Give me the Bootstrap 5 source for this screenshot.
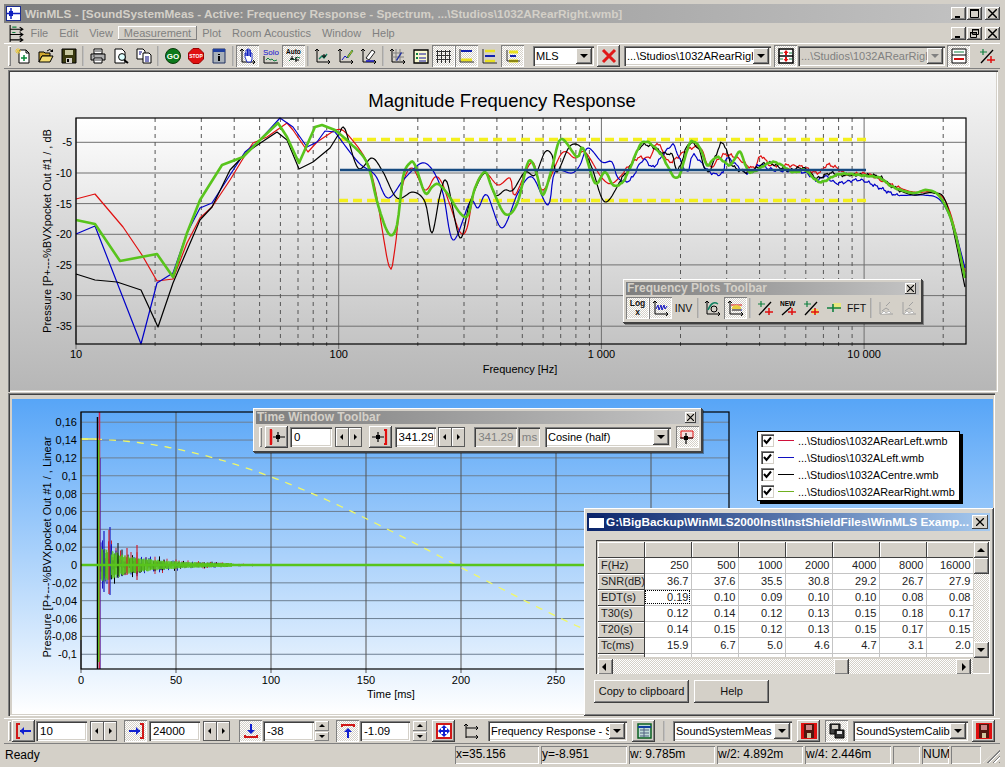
<!DOCTYPE html>
<html lang="en">
<head>
<meta charset="UTF-8" />
<title>WinMLS</title>
<link href="https://cdn.jsdelivr.net/npm/bootstrap@5.3.3/dist/css/bootstrap.min.css" rel="stylesheet" />
<style>
  html, body { margin: 0; height: 767px; overflow: hidden; background: #d4d0c8; }
  body { font: 11.5px "Liberation Sans", Arial, sans-serif; color: #000; }
  .app-frame { height: 767px; padding: 4px 5px 2px 4px; }
  .cap-bar { height: 19px; background: linear-gradient(90deg, #7e7e7e, #c4c4c4); color: #d4d0c8; font-weight: 700; font-size: 11.8px; padding-left: 2px; white-space: nowrap; }
  .app-ico { width: 15px; height: 15px; margin-right: 4px; }
  .win-key { width: 15px; height: 13px; padding: 0; border: 0; border-radius: 0; background: #d4d0c8; margin-left: 1px; box-shadow: inset -1px -1px #404040, inset 1px 1px #fff, inset -2px -2px #808080; display: inline-flex; align-items: center; justify-content: center; }
  .win-key svg { width: 9px; height: 9px; }
  .key-gap { margin-left: 3px; }
  .menu-row { height: 20px; color: #808080; font-size: 11px; padding-left: 4px; }
  .menu-ico { width: 17px; height: 17px; }
  .menu-item { padding: 1px 5.5px; }
  .menu-open { box-shadow: inset -1px -1px #808080, inset 1px 1px #fff; }
  .tool-row { height: 26px; padding-left: 4px; border-top: 1px solid #fff; border-bottom: 1px solid #808080; }
  .grip { width: 3px; height: 20px; background: #d4d0c8; box-shadow: inset 1px 1px #fff, inset -1px -1px #808080; flex: none; }
  .tb { width: 23px; height: 22px; padding: 0; border: 0; border-radius: 0; background: transparent; flex: none; display: inline-flex; align-items: center; justify-content: center; }
  .tb svg { width: 16px; height: 16px; overflow: visible; }
  .tb-up { box-shadow: inset -1px -1px #404040, inset 1px 1px #fff, inset -2px -2px #808080; background: #d4d0c8; }
  .tb-on { box-shadow: inset 1px 1px #808080, inset -1px -1px #fff; background: repeating-conic-gradient(#fff 0 25%, #d4d0c8 0 50%) 0 0 / 2px 2px; }
  .tb-sep { width: 6px; height: 20px; flex: none; position: relative; }
  .tb-sep::after { content: ""; position: absolute; left: 2px; top: 0; bottom: 0; width: 2px; background: #808080; box-shadow: 1px 0 #fff; transform: scaleX(.5); }
  .win-field { height: 20px; border-radius: 0; border: 0; padding: 1px 3px 1px 4px; font-size: 11.5px; line-height: 18px; background: #fff; color: #000; min-width: 0; box-shadow: inset 1px 1px #808080, inset 2px 2px #404040, inset -1px -1px #fff, inset -2px -2px #d4d0c8; white-space: nowrap; overflow: hidden; }
  .win-field:focus { box-shadow: inset 1px 1px #808080, inset 2px 2px #404040, inset -1px -1px #fff, inset -2px -2px #d4d0c8; background: #fff; }
  .field-off, .field-off:focus { background: #d4d0c8; color: #808080; }
  .win-combo { position: relative; flex: none; }
  .win-combo .win-field { width: 100%; padding: 1px 18px 1px 3px; font-size: 11px; }
  .combo-drop { position: absolute; right: 2px; top: 2px; width: 16px; height: 16px; background: #d4d0c8; box-shadow: inset -1px -1px #404040, inset 1px 1px #fff, inset -2px -2px #808080; }
  .combo-drop::after { content: ""; position: absolute; left: 4px; top: 6px; border: 4px solid transparent; border-top-color: #000; border-bottom: 0; }
  .combo-off .combo-drop::after { border-top-color: #808080; }
  .spin-h { width: 27px; height: 20px; flex: none; background: #5a5a5a; padding: 1px; gap: 1px; }
  .spin-h i { flex: 1; background: #d4d0c8; box-shadow: inset 1px 1px #fff; position: relative; }
  .spin-h i::after { content: ""; position: absolute; top: 6px; border: 3px solid transparent; }
  .spin-l::after { left: 4px; border-right: 3px solid #000 !important; border-left: 0 !important; }
  .spin-r::after { left: 5px; border-left: 3px solid #000 !important; border-right: 0 !important; }
  .spin-v { width: 14px; height: 20px; flex: none; gap: 1px; }
  .spin-v i { flex: 1; background: #d4d0c8; box-shadow: inset -1px -1px #808080, inset 1px 1px #fff; position: relative; }
  .spin-v i::after { content: ""; position: absolute; left: 4px; top: 3px; border: 3px solid transparent; }
  .spin-u::after { border-bottom: 3px solid #000 !important; border-top: 0 !important; }
  .spin-d::after { border-top: 3px solid #000 !important; border-bottom: 0 !important; }
  .gr1 { margin-right: 1px; } .gr2 { margin-right: 2px; } .gr3 { margin-right: 3px; } .gr4 { margin-right: 4px; }
  .gr5 { margin-right: 5px; } .gr6 { margin-right: 6px; } .gr7 { margin-right: 7px; } .gr9 { margin-right: 9px; }
  .gl3 { margin-left: 3px; }
  .w42 { width: 42px; } .w43 { width: 43px; } .w51 { width: 51px; } .w50 { width: 50px; } .w61 { width: 61px; }
  .w139 { width: 139px; } .w119 { width: 119px; } .w115 { width: 115px; } .w147 { width: 147px; } .w126 { width: 126px; }

  .work { height: 649px; }
  .chart-top { margin: 1px 0 0 4px; width: 990px; height: 322px; background: linear-gradient(#f6f6f6, #b6b6b6); box-shadow: inset 1px 1px #808080, inset 2px 2px #404040, inset -1px -1px #fff, inset -2px -2px #d4d0c8; }
  .chart-wrap { margin: 1px 0 0 4px; width: 987px; height: 323px; padding: 6px 3px 2px 4px; box-shadow: inset 1px 1px #808080, inset 2px 2px #404040, inset -1px -1px #fff; }
  .chart-low { width: 981px; height: 315px; background: linear-gradient(#57a5f7, #ffffff); }
  .chart-top svg, .chart-low svg { display: block; }
  .chart-svg text { font: 11px "Liberation Sans", Arial, sans-serif; fill: #000; }
  .chart-svg .plot-title { font-size: 18.5px; }

  .float-bar { position: absolute; background: #d4d0c8; box-shadow: inset -1px -1px #404040, inset 1px 1px #fff, 1px 1px #404040, 2px 2px rgba(0,0,0,.35); padding: 3px; }
  .float-freq { left: 619px; top: 210px; width: 299px; height: 44px; }
  .float-time { left: 249px; top: 339px; width: 449px; height: 44px; }
  .float-cap { height: 13px; background: linear-gradient(90deg, #7e7e7e, #c4c4c4); color: #d4d0c8; font-weight: 700; font-size: 12px; line-height: 13px; padding-left: 1px; margin-bottom: 2px; }
  .float-close { width: 11px; height: 11px; background: #d4d0c8; margin-right: 3px; box-shadow: inset -1px -1px #404040, inset 1px 1px #fff; }
  .float-close svg { display: block; width: 7px; height: 7px; margin: 2px; }
  .tb-txt { font-size: 10.5px; color: #111; line-height: 10px; }
  .tb-bold { font-weight: 700; font-size: 8.5px; line-height: 9px; }

  .graph-legend { position: absolute; left: 753px; top: 362px; width: 203px; height: 70px; background: #fff; border: 1px solid #000; box-shadow: 3px 3px #000; padding: 0 0 0 3px; font-size: 10.8px; }
  .legend-row { height: 17px; }
  .legend-box { width: 13px; height: 13px; flex: none; background: #fff; margin-right: 4px; box-shadow: inset 1px 1px #808080, inset 2px 2px #404040, inset -1px -1px #d4d0c8; }
  .legend-box svg { display: block; width: 13px; height: 13px; }
  .legend-line { width: 16px; height: 1px; flex: none; margin-right: 4px; }
  .lc-red { background: #d0103a; } .lc-blue { background: #1010c0; } .lc-black { background: #000; } .lc-green { background: #70b020; }

  .result-dlg { position: absolute; left: 580px; top: 439px; width: 410px; height: 208px; background: #d8d5ce; box-shadow: inset -1px -1px #404040, inset 1px 1px #fff, inset -2px -2px #808080; padding: 5px 4px 0 3px; }
  .dlg-cap { height: 18px; background: linear-gradient(90deg, #0a246a, #a6caf0); color: #fff; font-weight: 700; font-size: 11.8px; white-space: nowrap; padding-left: 2px; }
  .dlg-ico { width: 15px; height: 12px; background: #fff; border-top: 2px solid #0a246a; margin-right: 2px; flex: none; }
  .dlg-x { width: 16px; height: 14px; margin: 0 2px 0 auto; background: #d4d0c8; flex: none; box-shadow: inset -1px -1px #404040, inset 1px 1px #fff; }
  .dlg-x svg { display: block; width: 8px; height: 8px; margin: 3px 4px; }
  .grid-shell { margin: 9px 0 0 9px; width: 394px; height: 134px; padding: 2px 1px 1px 2px; background: #d4d0c8; box-shadow: inset 1px 1px #404040, inset -1px -1px #fff; overflow: hidden; }
  .grid-view { width: 375px; height: 115px; overflow: hidden; background: #fff; }
  .result-table { table-layout: fixed; border-collapse: collapse; width: 375px; font-size: 11px; }
  .result-table td { height: 16px; padding: 0 2px 0 0; text-align: right; line-height: 15px; border: 1px solid #c4c4c4; overflow: hidden; white-space: nowrap; color: #222; }
  .result-table tr:first-child td { height: 15px; }
  .result-table tr > td:first-child, .result-table tr:first-child td { background: #d4d0c8; text-align: left; padding-left: 3px; border: 0; border-right: 1px solid #404040; border-bottom: 1px solid #404040; box-shadow: inset 1px 1px #fff; }
  .cell-sel { outline: 1px dotted #000; outline-offset: -2px; }
  .v-scroll { width: 15px; height: 116px; margin-left: 1px; background: repeating-conic-gradient(#fff 0 25%, #d4d0c8 0 50%) 0 0 / 2px 2px; position: relative; }
  .h-scroll { height: 16px; width: 375px; background: repeating-conic-gradient(#fff 0 25%, #d4d0c8 0 50%) 0 0 / 2px 2px; position: relative; margin-top: 1px; }
  .sc-btn { position: absolute; background: #d4d0c8; box-shadow: inset -1px -1px #404040, inset 1px 1px #fff, inset -2px -2px #808080; width: 15px; height: 16px; }
  .sc-btn::after { content: ""; position: absolute; border: 4px solid transparent; }
  .sc-top { top: 0; left: 0; } .sc-top::after { left: 3px; top: 2px; border-bottom-color: #000; }
  .sc-thumb-v { top: 16px; left: 0; }
  .sc-bot { bottom: 0; left: 0; } .sc-bot::after { left: 3px; top: 6px; border-top-color: #000; }
  .sc-left { left: 0; top: 0; } .sc-left::after { left: 0; top: 4px; border-right-color: #000; }
  .sc-thumb-h { left: 236px; top: 0; }
  .sc-right { right: 2px; top: 0; } .sc-right::after { left: 6px; top: 4px; border-left-color: #000; }
  .dlg-btn { height: 23px; padding: 0; border: 0; border-radius: 0; background: #d4d0c8; font-size: 11px; color: #111; box-shadow: inset -1px -1px #404040, inset 1px 1px #fff, inset -2px -2px #808080; }
  .dlg-btn-copy { width: 95px; margin: 6px 5px 0 7px; }
  .dlg-btn-help { width: 75px; margin-top: 6px; }

  .low-row { height: 26px; padding-left: 4px; border-top: 1px solid #fff; border-bottom: 1px solid #808080; }
  .status-row { height: 20px; font-size: 12px; padding: 2px 0 0 1px; }
  .status-ready { flex: 1; }
  .status-cell { height: 18px; margin-right: 2px; padding-left: 1px; line-height: 17px; box-shadow: inset 1px 1px #808080, inset -1px -1px #fff; flex: none; overflow: hidden; white-space: nowrap; }
  .sw84 { width: 84px; } .sw86 { width: 86px; } .sw27 { width: 27px; } .sw30 { width: 30px; }
  .size-grip { width: 17px; height: 16px; flex: none; background: repeating-linear-gradient(135deg, #d4d0c8 0 2px, #808080 2px 3px, #fff 3px 4px); clip-path: polygon(100% 0, 100% 100%, 0 100%); }
</style>
</head>
<body>
<svg class="d-none" xmlns="http://www.w3.org/2000/svg">
  <symbol id="i-axes" viewBox="0 0 16 16"><path d="M2 1v13h13M0 3l2-2 2 2M13 12l2 2-2 2" fill="none" stroke="#000"/></symbol>
  <symbol id="i-new" viewBox="0 0 16 16"><path d="M4 2h7l3 3v10H4z" fill="#fff" stroke="#000"/><path d="M11 2v3h3" fill="none" stroke="#000"/><path d="M6 10h6M9 7v6" stroke="#0a8a3a" stroke-width="1.5"/><path d="M3 0v6M0 3h6M1 1l4 4M5 1l-4 4" stroke="#e8c840"/></symbol>
  <symbol id="i-open" viewBox="0 0 16 16"><path d="M1 4h5l1 1h5v3H4l-3 6z" fill="#d0a830" stroke="#000"/><path d="M4 8h11l-3 6H1z" fill="#f4dc70" stroke="#000"/><path d="M9 3q3-3 5 0" fill="none" stroke="#000"/><path d="M15 1v3h-3z"/></symbol>
  <symbol id="i-save" viewBox="0 0 16 16"><path d="M1 1h14v14H1z" fill="#3a3a10" stroke="#000"/><path d="M4 2h8v5H4z" fill="#c8c8a0"/><path d="M5 10h6v5H5z" fill="#d4d0c8"/><path d="M6 11h2v3H6z"/></symbol>
  <symbol id="i-print" viewBox="0 0 16 16"><path d="M4 1h8v5H4z" fill="#fff" stroke="#000"/><path d="M1 6h14v6H1z" fill="#b0b0b0" stroke="#000"/><path d="M4 10h8v5H4z" fill="#fff" stroke="#000"/><path d="M5 12h6M5 3h6M3 8h2" stroke="#404040"/></symbol>
  <symbol id="i-prev" viewBox="0 0 16 16"><path d="M2 1h7l3 3v11H2z" fill="#fff" stroke="#000"/><circle cx="9" cy="9" r="3.4" fill="#dff" stroke="#000"/><path d="M11 12l4 3" stroke="#000" stroke-width="2"/></symbol>
  <symbol id="i-copy" viewBox="0 0 16 16"><path d="M1 1h6l2 2v8H1z" fill="#fff" stroke="#000"/><path d="M7 5h6l2 2v8H7z" fill="#fff" stroke="#000"/><path d="M3 4h3M3 6h2M9 9h4M9 11h4M9 13h4" stroke="#000080"/></symbol>
  <symbol id="i-go" viewBox="0 0 16 16"><circle cx="8" cy="8" r="7.5" fill="#0c7a1c" stroke="#0a3a0a"/><text x="8" y="11" text-anchor="middle" font-family="Liberation Sans" font-weight="700" font-size="8" fill="#fff">GO</text></symbol>
  <symbol id="i-stop" viewBox="0 0 16 16"><path d="M5 .5h6L15.500 5v6L11 15.500H5L.5 11V5z" fill="#e01010" stroke="#900"/><text x="8" y="10" text-anchor="middle" font-family="Liberation Sans" font-weight="700" font-size="5" fill="#fff">STOP</text></symbol>
  <symbol id="i-info" viewBox="0 0 16 16"><path d="M2 1h12v14H2z" fill="#a8b0b8" stroke="#203060"/><path d="M2 1h12v3H2z" fill="#2040a0"/><path d="M7 6h2v1H7zM7 8h2v5H7z" fill="#000"/></symbol>
  <symbol id="i-hand" viewBox="0 0 16 16"><use href="#i-axes"/><path d="M5 9V5h1v3-6h1.500v6V1H9v7-6h1.500v7-4H12v6l-1 3H7z" fill="#fff" stroke="#1020c0" stroke-width=".9"/></symbol>
  <symbol id="i-solo" viewBox="0 0 16 16"><text x="0" y="7" font-family="Liberation Sans" font-size="8" fill="#1010d0">Solo</text><path d="M1 8v7h14" fill="none" stroke="#000"/><path d="M3 12l2-2 2 2 2-1 2 2 3-1" fill="none" stroke="#108040"/></symbol>
  <symbol id="i-auto" viewBox="0 0 16 16"><text x="0" y="6" font-family="Liberation Sans" font-weight="700" font-size="6.500" fill="#000">Auto</text><path d="M3 13l3-3 2 2 3-3 3 1" fill="none" stroke="#108040"/><path d="M6 8v4M10 9v5M4 11h4M9 12h4" stroke="#000"/></symbol>
  <symbol id="i-g1" viewBox="0 0 16 16"><use href="#i-axes"/><path d="M4 11l3-3 2 2 3-4" fill="none" stroke="#108060" stroke-width="1.400"/><path d="M9 6v4M7 8h4" stroke="#000"/></symbol>
  <symbol id="i-g2" viewBox="0 0 16 16"><use href="#i-axes"/><path d="M4 12l3-4 2 2 3-5" fill="none" stroke="#1010c0"/><path d="M9 9l5-7 1 1-5 7z" fill="#e0c020" stroke="#108030" stroke-width=".7"/></symbol>
  <symbol id="i-g3" viewBox="0 0 16 16"><use href="#i-axes"/><path d="M5 10l6-8 3 2-6 8z" fill="#fff" stroke="#202020"/><path d="M5 13h8" stroke="#1010c0" stroke-width="1.500"/></symbol>
  <symbol id="i-g4" viewBox="0 0 16 16"><use href="#i-axes"/><path d="M2 5h12M2 9h12M6 1v13M10 1v13" stroke="#808080"/><path d="M6 12l5-8 1 1-5 8z" fill="#2030a0"/></symbol>
  <symbol id="i-list" viewBox="0 0 16 16"><path d="M1 2h14v13H1z" fill="#f8f8d0" stroke="#000" stroke-width="1.300"/><path d="M3 5h2v2H3zM3 9h2v2H3z" fill="#108040"/><path d="M6 6h7M6 10h7M6 13h7" stroke="#1010a0"/></symbol>
  <symbol id="i-grid" viewBox="0 0 16 16"><path d="M1.500 2v13M5.500 2v13M9.500 2v13M13.500 2v13M0 3.500h15M0 7.500h15M0 11.500h15" stroke="#303030"/></symbol>
  <symbol id="i-yb" viewBox="0 0 16 16"><path d="M2 3h11" stroke="#1020b0" stroke-width="2"/><path d="M2 12h11" stroke="#e8e020" stroke-width="3"/><path d="M1 1v13h14" fill="none" stroke="#000" stroke-width=".8"/></symbol>
  <symbol id="i-yc" viewBox="0 0 16 16"><path d="M3 3h10M3 13h10" stroke="#e8e020" stroke-width="2.500"/><path d="M3 8h10" stroke="#1020b0" stroke-width="2"/><path d="M1 1v14h14" fill="none" stroke="#000" stroke-width=".8"/></symbol>
  <symbol id="i-yd" viewBox="0 0 16 16"><path d="M4 4h9M4 13h9" stroke="#e8e020" stroke-width="3"/><path d="M5 8h6" stroke="#1020b0" stroke-width="2"/><path d="M2 2v11h13" fill="none" stroke="#000" stroke-width=".8"/></symbol>
  <symbol id="i-x" viewBox="0 0 16 16"><path d="M2 2l12 12M14 2L2 14" stroke="#e01818" stroke-width="3"/></symbol>
  <symbol id="i-match" viewBox="0 0 16 16"><path d="M1 1h14v14H1z" fill="#fff" stroke="#000" stroke-width="1.500"/><path d="M1 8h14" stroke="#000" stroke-width="1.500"/><path d="M8 3v4M8 9v4" stroke="#e01010" stroke-width="2"/><path d="M5.500 5L8 2l2.500 3zM5.500 11L8 14l2.500-3z" fill="#e01010"/><path d="M2 5h3M11 5h3M2 11h3M11 11h3" stroke="#108040"/></symbol>
  <symbol id="i-stack" viewBox="0 0 16 16"><path d="M1 1h14v14H1z" fill="#fff" stroke="#000"/><path d="M1 7h14" stroke="#000"/><path d="M3 4h10" stroke="#108040"/><path d="M3 11h10" stroke="#d01010" stroke-width="2"/></symbol>
  <symbol id="i-merge" viewBox="0 0 16 16"><path d="M2 15L14 2" stroke="#000" stroke-width="1.300"/><path d="M1 4h7M4 1v6" stroke="#108040" stroke-width="1.200"/><path d="M8 12h8M12 8v7" stroke="#e01010" stroke-width="1.500"/></symbol>
  <symbol id="i-merge2" viewBox="0 0 16 16"><text x="0" y="6" font-family="Liberation Sans" font-weight="700" font-size="6.500">NEW</text><path d="M2 15l9-8" stroke="#000" stroke-width="1.300"/><path d="M8 12h8M12 8v7" stroke="#e01010" stroke-width="1.500"/></symbol>
  <symbol id="i-merge3" viewBox="0 0 16 16"><path d="M2 15L14 2" stroke="#000" stroke-width="1.300"/><path d="M1 4h7M4 1v6" stroke="#108040" stroke-width="1.200"/><path d="M9 9h6v5H9z" fill="#f0e060"/><path d="M8 12h8M12 8v7" stroke="#e01010" stroke-width="1.500"/></symbol>
  <symbol id="i-cross" viewBox="0 0 16 16"><path d="M7 3h8v6H7z" fill="#e8e880"/><path d="M1 8h14M7 4v8" stroke="#108040" stroke-width="1.600"/></symbol>
  <symbol id="i-wave" viewBox="0 0 16 16"><use href="#i-axes"/><path d="M3 9l2-4 1 5 2-5 1 5 2-5 1 4 2-3" fill="none" stroke="#1010c0"/></symbol>
  <symbol id="i-phase" viewBox="0 0 16 16"><use href="#i-axes"/><path d="M3 10Q7 0 13 4" fill="none" stroke="#108060" stroke-width="1.500"/><circle cx="9" cy="9" r="3" fill="none" stroke="#000"/></symbol>
  <symbol id="i-stepb" viewBox="0 0 16 16"><use href="#i-axes"/><path d="M3 5h11" stroke="#e01010"/><path d="M4 7q4-4 9 0v4H4z" fill="#e8d040"/><path d="M4 10h10" stroke="#1020b0"/></symbol>
  <symbol id="i-gray1" viewBox="0 0 16 16"><path d="M2 2v12h13" fill="none" stroke="#a0a0a0"/><path d="M4 11l4-3 3 2M8 6l4-4" fill="none" stroke="#a0a0a0"/><path d="M3 14l3-3 2 2 3-2 2 2" fill="#fff" stroke="#b8b8b8"/></symbol>
  <symbol id="i-lspk" viewBox="0 0 16 16"><path d="M1 1H0v14h1" transform="translate(2)" fill="none" stroke="#e01010" stroke-width="2.500"/><path d="M4 8h12M9 3v10" stroke="#000" stroke-width="1.200"/><path d="M7 6h4v4H7z"/></symbol>
  <symbol id="i-rspk" viewBox="0 0 16 16"><path d="M12 1h2v14h-2" fill="none" stroke="#e01010" stroke-width="2.200"/><path d="M0 8h12M6 3v10" stroke="#000" stroke-width="1.200"/><path d="M4 6h4v4H4z"/></symbol>
  <symbol id="i-box-spk" viewBox="0 0 16 16"><path d="M2 2h12v7H2z" fill="#f4e0e0" stroke="#e01010"/><path d="M1 9h13M7 4v11" stroke="#000" stroke-width="1.200"/><path d="M5 7h4v4H5z"/></symbol>
  <symbol id="i-xl" viewBox="0 0 16 16"><path d="M4 1H1v14h3" fill="none" stroke="#d01818" stroke-width="2"/><path d="M4 8h11" stroke="#1020d0" stroke-width="2"/><path d="M8 4l-4 4 4 4z" fill="#1020d0"/></symbol>
  <symbol id="i-xr" viewBox="0 0 16 16"><path d="M12 1h3v14h-3" fill="none" stroke="#d01818" stroke-width="2"/><path d="M1 8h11" stroke="#1020d0" stroke-width="2"/><path d="M8 4l4 4-4 4z" fill="#1020d0"/></symbol>
  <symbol id="i-yl" viewBox="0 0 16 16"><path d="M2 12v2h12v-2" fill="none" stroke="#d01818" stroke-width="2"/><path d="M8 1v9" stroke="#1020d0" stroke-width="2"/><path d="M4 7l4 4 4-4z" fill="#1020d0"/></symbol>
  <symbol id="i-yh" viewBox="0 0 16 16"><path d="M2 4V2h12v2" fill="none" stroke="#d01818" stroke-width="2"/><path d="M8 6v9" stroke="#1020d0" stroke-width="2"/><path d="M4 9l4-4 4 4z" fill="#1020d0"/></symbol>
  <symbol id="i-fit" viewBox="0 0 16 16"><path d="M1 1h14v14H1z" fill="#fff" stroke="#d01818" stroke-width="2"/><path d="M3 8h10M8 3v10" stroke="#1020d0" stroke-width="2"/><path d="M5 5L2 8l3 3zM11 5l3 3-3 3zM5 5l3-3 3 3zM5 11l3 3 3-3z" fill="#1020d0"/></symbol>
  <symbol id="i-axes2" viewBox="0 0 16 16"><path d="M2 1v14M2 5h12M2 14h12M0 3l2-2 2 2M12 3l2 2-2 2M12 12l2 2-2 2" fill="none" stroke="#000"/></symbol>
  <symbol id="i-tbl" viewBox="0 0 16 16"><path d="M2 1h13v14H2z" fill="#c0dcd8" stroke="#0a6020" stroke-width="1.500"/><path d="M2 4h13" stroke="#1040a0" stroke-width="2"/><path d="M4 7h9M4 10h9M4 13h9M8 5v9" stroke="#506080"/></symbol>
  <symbol id="i-disk" viewBox="0 0 16 16"><path d="M0 0h16v16H0z" fill="#e01010"/><path d="M3 1h10v14H3z" fill="#501810"/><path d="M5 2h6v5H5z" fill="#c88"/><path d="M6 10h4v5H6z" fill="#d0c8a0"/></symbol>
  <symbol id="i-disk2" viewBox="0 0 16 16"><path d="M1 1h10v10H1z" fill="#404040" stroke="#000"/><path d="M3 2h6v4H3z" fill="#d4d0c8"/><path d="M6 7h9v8H6z" fill="#303030" stroke="#000"/><path d="M8 8h5v3H8z" fill="#e0e0e0"/></symbol>
  <symbol id="i-close" viewBox="0 0 8 8"><path d="M0 0l8 8M8 0L0 8" stroke="#000" stroke-width="1.300"/></symbol>
  <symbol id="i-min" viewBox="0 0 9 9"><path d="M1 7h5v2H1z"/></symbol>
  <symbol id="i-max" viewBox="0 0 9 9"><path d="M.5 1.500h8v7h-8z" fill="none" stroke="#000"/><path d="M0 0h9v2H0z"/></symbol>
  <symbol id="i-res" viewBox="0 0 9 9"><path d="M2.500 .5h6v5h-6zM.5 3.500h6v5h-6z" fill="#d4d0c8" stroke="#000"/><path d="M2 0h7v1.500H2zM0 3h7v1.500H0z"/></symbol>
  <symbol id="i-check" viewBox="0 0 13 13"><path d="M3 6l2.500 3L10 3.500" fill="none" stroke="#000" stroke-width="2"/></symbol>
</svg>

<div class="app-frame d-flex flex-column">
  <div class="cap-bar d-flex align-items-center">
    <svg class="app-ico" viewBox="0 0 15 15"><path d="M0 0h15v15H0z" fill="#1c2c90"/><path d="M1 1h13v13H1z" fill="#fff"/><path d="M1 7.500h13M5 2v11" stroke="#1020c0" stroke-width="1.500"/><path d="M3 5h4v5H3z" fill="#1020c0"/></svg>
    <span>WinMLS - [SoundSystemMeas - Active: Frequency Response - Spectrum, ...\Studios\1032ARearRight.wmb]</span>
    <div class="ms-auto d-flex align-items-center">
      <span class="win-key"><svg><use href="#i-min"/></svg></span>
      <span class="win-key"><svg><use href="#i-max"/></svg></span>
      <span class="win-key key-gap"><svg><use href="#i-close"/></svg></span>
    </div>
  </div>

  <div class="menu-row d-flex align-items-center">
    <svg class="menu-ico" viewBox="0 0 16 16"><path d="M2 0v16M2 4h12M2 9h12M2 14h12M11 2l3 2-3 2M11 7l3 2-3 2M11 12l3 2-3 2" fill="none" stroke="#000"/><path d="M4 2h4M4 7h3" stroke="#108040"/></svg>
    <span class="menu-item">File</span><span class="menu-item">Edit</span><span class="menu-item">View</span>
    <span class="menu-item menu-open">Measurement</span>
    <span class="menu-item">Plot</span><span class="menu-item">Room Acoustics</span><span class="menu-item">Window</span><span class="menu-item">Help</span>
    <div class="ms-auto d-flex align-items-center">
      <span class="win-key"><svg><use href="#i-min"/></svg></span>
      <span class="win-key"><svg><use href="#i-res"/></svg></span>
      <span class="win-key key-gap"><svg><use href="#i-close"/></svg></span>
    </div>
  </div>

  <div class="tool-row d-flex align-items-center">
    <span class="grip"></span>
    <button class="btn tb"><svg><use href="#i-new"/></svg></button>
    <button class="btn tb"><svg><use href="#i-open"/></svg></button>
    <button class="btn tb"><svg><use href="#i-save"/></svg></button>
    <span class="tb-sep"></span>
    <button class="btn tb"><svg><use href="#i-print"/></svg></button>
    <button class="btn tb"><svg><use href="#i-prev"/></svg></button>
    <button class="btn tb"><svg><use href="#i-copy"/></svg></button>
    <span class="tb-sep"></span>
    <button class="btn tb"><svg><use href="#i-go"/></svg></button>
    <button class="btn tb"><svg><use href="#i-stop"/></svg></button>
    <button class="btn tb"><svg><use href="#i-info"/></svg></button>
    <span class="tb-sep"></span>
    <button class="btn tb tb-on"><svg><use href="#i-hand"/></svg></button>
    <button class="btn tb"><svg><use href="#i-solo"/></svg></button>
    <button class="btn tb tb-on"><svg><use href="#i-auto"/></svg></button>
    <span class="tb-sep"></span>
    <button class="btn tb"><svg><use href="#i-g1"/></svg></button>
    <button class="btn tb"><svg><use href="#i-g2"/></svg></button>
    <button class="btn tb"><svg><use href="#i-g3"/></svg></button>
    <span class="tb-sep"></span>
    <button class="btn tb"><svg><use href="#i-g4"/></svg></button>
    <button class="btn tb"><svg><use href="#i-list"/></svg></button>
    <button class="btn tb tb-on"><svg><use href="#i-grid"/></svg></button>
    <button class="btn tb tb-on"><svg><use href="#i-yb"/></svg></button>
    <button class="btn tb"><svg><use href="#i-yc"/></svg></button>
    <button class="btn tb tb-on gr9"><svg><use href="#i-yd"/></svg></button>
    <div class="win-combo w61 gr3"><input class="form-control win-field" value="MLS" readonly /><span class="combo-drop"></span></div>
    <button class="btn tb tb-up gr4"><svg><use href="#i-x"/></svg></button>
    <div class="win-combo w147 gr3"><input class="form-control win-field" value="...\Studios\1032ARearRight.wmb" readonly /><span class="combo-drop"></span></div>
    <button class="btn tb tb-on gr1"><svg><use href="#i-match"/></svg></button>
    <div class="win-combo combo-off w147 gr2"><input class="form-control win-field field-off" value="...\Studios\1032ARearRight.wmb" readonly /><span class="combo-drop"></span></div>
    <button class="btn tb tb-on gr5"><svg><use href="#i-stack"/></svg></button>
    <button class="btn tb"><svg><use href="#i-merge"/></svg></button>
  </div>

  <div class="work position-relative">
    <div class="chart-top">
      <svg id="freqChart" class="chart-svg" xmlns="http://www.w3.org/2000/svg" width="990" height="322" viewBox="8 70 990 322"></svg>
    </div>
    <div class="chart-wrap">
      <div class="chart-low">
        <svg id="timeChart" class="chart-svg" xmlns="http://www.w3.org/2000/svg" width="981" height="315" viewBox="12 399 981 315"></svg>
      </div>
    </div>

    <div class="float-bar float-freq">
      <div class="float-cap d-flex align-items-center justify-content-between"><span>Frequency Plots Toolbar</span><span class="float-close"><svg><use href="#i-close"/></svg></span></div>
      <div class="d-flex align-items-center">
        <button class="btn tb tb-on tb-txt tb-bold">Log<br />x</button>
        <button class="btn tb tb-on"><svg><use href="#i-wave"/></svg></button>
        <button class="btn tb tb-txt">INV</button>
        <span class="tb-sep"></span>
        <button class="btn tb"><svg><use href="#i-phase"/></svg></button>
        <button class="btn tb tb-on"><svg><use href="#i-stepb"/></svg></button>
        <span class="tb-sep"></span>
        <button class="btn tb"><svg><use href="#i-merge"/></svg></button>
        <button class="btn tb"><svg><use href="#i-merge2"/></svg></button>
        <button class="btn tb"><svg><use href="#i-merge3"/></svg></button>
        <button class="btn tb"><svg><use href="#i-cross"/></svg></button>
        <button class="btn tb tb-txt">FFT</button>
        <span class="tb-sep"></span>
        <button class="btn tb"><svg><use href="#i-gray1"/></svg></button>
        <button class="btn tb"><svg><use href="#i-gray1"/></svg></button>
      </div>
    </div>

    <div class="float-bar float-time">
      <div class="float-cap d-flex align-items-center justify-content-between"><span>Time Window Toolbar</span><span class="float-close"><svg><use href="#i-close"/></svg></span></div>
      <div class="d-flex align-items-center">
        <span class="grip gl3 gr3"></span>
        <button class="btn tb tb-up gr2"><svg><use href="#i-lspk"/></svg></button>
        <input class="form-control win-field w42 gr3" value="0" readonly />
        <span class="d-flex spin-h gr7"><i class="spin-l"></i><i class="spin-r"></i></span>
        <button class="btn tb tb-up gr3"><svg><use href="#i-rspk"/></svg></button>
        <input class="form-control win-field w42 gr2" value="341.29" readonly />
        <span class="d-flex spin-h gr9"><i class="spin-l"></i><i class="spin-r"></i></span>
        <input class="form-control win-field field-off w43 gr1" value="341.29" readonly />
        <span class="win-field field-off gr5">ms</span>
        <div class="win-combo w126 gr5"><input class="form-control win-field" value="Cosine (half)" readonly /><span class="combo-drop"></span></div>
        <button class="btn tb tb-on"><svg><use href="#i-box-spk"/></svg></button>
      </div>
    </div>

    <div class="graph-legend">
      <div class="legend-row d-flex align-items-center"><span class="legend-box"><svg><use href="#i-check"/></svg></span><span class="legend-line lc-red"></span><span>...\Studios\1032ARearLeft.wmb</span></div>
      <div class="legend-row d-flex align-items-center"><span class="legend-box"><svg><use href="#i-check"/></svg></span><span class="legend-line lc-blue"></span><span>...\Studios\1032ALeft.wmb</span></div>
      <div class="legend-row d-flex align-items-center"><span class="legend-box"><svg><use href="#i-check"/></svg></span><span class="legend-line lc-black"></span><span>...\Studios\1032ACentre.wmb</span></div>
      <div class="legend-row d-flex align-items-center"><span class="legend-box"><svg><use href="#i-check"/></svg></span><span class="legend-line lc-green"></span><span>...\Studios\1032ARearRight.wmb</span></div>
    </div>

    <div class="result-dlg">
      <div class="dlg-cap d-flex align-items-center"><span class="dlg-ico"></span><span>G:\BigBackup\WinMLS2000Inst\InstShieldFiles\WinMLS Examp...</span><span class="dlg-x"><svg><use href="#i-close"/></svg></span></div>
      <div class="grid-shell">
        <div class="d-flex">
          <div class="grid-view">
            <table class="result-table" id="resultTable"></table>
          </div>
          <div class="v-scroll"><span class="sc-btn sc-top"></span><span class="sc-btn sc-thumb-v"></span><span class="sc-btn sc-bot"></span></div>
        </div>
        <div class="h-scroll"><span class="sc-btn sc-left"></span><span class="sc-btn sc-thumb-h"></span><span class="sc-btn sc-right"></span></div>
      </div>
      <button class="btn dlg-btn dlg-btn-copy">Copy to clipboard</button><button class="btn dlg-btn dlg-btn-help">Help</button>
    </div>
  </div>

  <div class="low-row d-flex align-items-center">
    <span class="grip gr1"></span>
    <button class="btn tb tb-up gr1"><svg><use href="#i-xl"/></svg></button>
    <input class="form-control win-field w51 gr3" value="10" readonly />
    <span class="d-flex spin-h gr7"><i class="spin-l"></i><i class="spin-r"></i></span>
    <button class="btn tb tb-on gr2"><svg><use href="#i-xr"/></svg></button>
    <input class="form-control win-field w51 gr3" value="24000" readonly />
    <span class="d-flex spin-h gr9"><i class="spin-l"></i><i class="spin-r"></i></span>
    <button class="btn tb tb-on gr1"><svg><use href="#i-yl"/></svg></button>
    <input class="form-control win-field w51 gr1" value="-38" readonly />
    <span class="d-flex flex-column spin-v gr7"><i class="spin-u"></i><i class="spin-d"></i></span>
    <button class="btn tb tb-on gr1"><svg><use href="#i-yh"/></svg></button>
    <input class="form-control win-field w50 gr3" value="-1.09" readonly />
    <span class="d-flex flex-column spin-v gr5"><i class="spin-u"></i><i class="spin-d"></i></span>
    <button class="btn tb tb-up gr5"><svg><use href="#i-fit"/></svg></button>
    <button class="btn tb gr5"><svg><use href="#i-axes2"/></svg></button>
    <div class="win-combo w139 gr5"><input class="form-control win-field" value="Frequency Response - Spectrum" readonly /><span class="combo-drop"></span></div>
    <button class="btn tb tb-up gr6"><svg><use href="#i-tbl"/></svg></button>
    <span class="tb-sep gr6"></span>
    <div class="win-combo w119 gr5"><input class="form-control win-field" value="SoundSystemMeas" readonly /><span class="combo-drop"></span></div>
    <button class="btn tb tb-up gr5"><svg><use href="#i-disk"/></svg></button>
    <button class="btn tb tb-on gr5"><svg><use href="#i-disk2"/></svg></button>
    <div class="win-combo w115 gr4"><input class="form-control win-field" value="SoundSystemCalibration" readonly /><span class="combo-drop"></span></div>
    <button class="btn tb tb-up"><svg><use href="#i-disk"/></svg></button>
  </div>

  <div class="status-row d-flex align-items-center">
    <span class="status-ready">Ready</span>
    <span class="status-cell sw84">x=35.156</span>
    <span class="status-cell sw86">y=-8.951</span>
    <span class="status-cell sw86">w: 9.785m</span>
    <span class="status-cell sw86">w/2: 4.892m</span>
    <span class="status-cell sw86">w/4: 2.446m</span>
    <span class="status-cell sw27"></span>
    <span class="status-cell sw27">NUM</span>
    <span class="status-cell sw30"></span>
    <span class="size-grip"></span>
  </div>
</div>

<script src="https://cdn.jsdelivr.net/npm/bootstrap@5.3.3/dist/js/bootstrap.bundle.min.js"></script>
<script>
  // frequency plot: traces read off in page pixels, so the viewBox uses page coordinates
  const freqTraces = [
    { color: "#e01010", width: 1.2, phase: 0.4, head: [[76,199],[95,194],[123,227],[142,255],[157,281],[173,279],[187,243],[200,218],[212,207],[230,180],[247,152],[253,143],[267,137],[287,123],[293,130],[308,152],[317,142],[335,130]],
      tail: [[335,130],[345,132],[365,158],[375,188],[389,266],[395,248],[402,188],[412,168],[425,190],[435,177],[442,183],[450,205],[460,232],[467,228],[475,188],[485,173],[498,185],[510,178],[515,195],[532,162],[543,190],[562,153],[575,158],[585,152],[602,178],[613,183],[628,167],[638,158],[650,157],[657,143],[663,152],[670,162],[687,150],[700,148],[710,167],[723,155],[737,158],[753,168],[761,156],[770,165],[783,165],[803,167],[813,172],[820,172],[827,165],[835,167],[847,174],[867,174],[887,183],[913,192],[937,193],[950,212],[965,272]] },
    { color: "#0000c8", width: 1.2, phase: 1.9, head: [[76,234],[95,226],[141,344],[157,283],[173,273],[187,233],[200,208],[212,203],[230,175],[245,152],[260,140],[280,118],[293,127],[307,147],[317,142],[325,131],[335,132]],
      tail: [[335,132],[358,162],[375,175],[388,198],[405,178],[425,163],[442,190],[453,240],[470,202],[478,208],[487,195],[502,228],[518,193],[532,177],[548,205],[555,172],[572,173],[580,165],[588,148],[602,162],[612,162],[618,178],[630,180],[643,160],[653,167],[663,155],[673,145],[680,160],[688,172],[693,155],[710,172],[723,173],[727,158],[747,173],[760,165],[773,170],[803,172],[817,180],[825,176],[837,183],[860,180],[880,188],[897,195],[923,195],[940,200],[953,225],[965,268]] },
    { color: "#000000", width: 1.2, phase: 3.1, head: [[76,274],[95,280],[117,282],[141,290],[158,327],[173,283],[200,220],[212,207],[230,170],[247,152],[277,132],[287,140],[299,169],[313,162],[330,148],[340,132]],
      tail: [[340,132],[345,129],[358,168],[372,158],[383,172],[397,198],[413,192],[425,202],[432,233],[440,195],[447,182],[460,238],[470,202],[485,173],[495,195],[505,190],[513,190],[525,172],[535,175],[545,152],[552,155],[557,172],[570,146],[582,148],[592,168],[605,202],[622,178],[630,167],[643,145],[663,153],[672,155],[678,170],[688,145],[698,148],[708,172],[722,143],[732,165],[748,172],[767,163],[787,170],[803,168],[817,178],[830,173],[840,175],[863,175],[880,177],[893,187],[913,195],[933,193],[947,205],[965,287]] },
    { color: "#58c41c", width: 2.6, phase: 5.2, head: [[76,220],[95,224],[120,261],[157,254],[173,277],[187,233],[200,200],[222,165],[243,157],[260,140],[278,123],[287,137],[299,163],[315,127],[322,125],[335,130]],
      tail: [[335,130],[350,143],[367,163],[378,205],[389,234],[397,225],[403,177],[410,163],[415,165],[425,193],[432,187],[438,184],[447,193],[460,213],[468,215],[475,188],[485,172],[492,188],[505,214],[517,204],[527,165],[532,162],[537,175],[543,195],[552,168],[561,139],[577,157],[583,148],[595,183],[605,172],[613,185],[622,183],[630,168],[643,142],[660,153],[677,178],[690,143],[700,148],[707,165],[717,157],[730,165],[740,152],[750,172],[773,162],[793,172],[805,170],[820,182],[840,174],[867,176],[880,178],[893,187],[913,193],[927,190],[940,197],[953,225],[965,278]] }
  ];

  // catmull-rom through the read-off points, plus the fine ripple the data has above 1 kHz
  function sampleTail(pts, phase, ripple) {
    const out = [];
    for (let i = 0; i < pts.length - 1; i++) {
      const p0 = pts[Math.max(i - 1, 0)], p1 = pts[i], p2 = pts[i + 1], p3 = pts[Math.min(i + 2, pts.length - 1)];
      const n = Math.max(2, Math.ceil((p2[0] - p1[0]) / 1.5));
      for (let k = 0; k < n; k++) {
        const t = k / n, t2 = t * t, t3 = t2 * t;
        const cr = (a, b, c, d) => 0.5 * (2 * b + (c - a) * t + (2 * a - 5 * b + 4 * c - d) * t2 + (3 * b - a - 3 * c + d) * t3);
        const x = cr(p0[0], p1[0], p2[0], p3[0]);
        let y = cr(p0[1], p1[1], p2[1], p3[1]);
        if (x > 620 && x < 900) y += ripple * (Math.sin(x * 0.9 + phase) + 0.6 * Math.sin(x * 2.3 + phase * 2));
        out.push(x.toFixed(1) + " " + y.toFixed(1));
      }
    }
    const end = pts[pts.length - 1];
    out.push(end[0] + " " + end[1]);
    return out.join("L");
  }

  function drawFreq() {
    const L = 76, R = 966, T = 118, B = 344, dec = 262.7;
    const xOf = (f) => L + dec * (Math.log10(f) - 1);
    const yOf = (db) => 142.3 + (-5 - db) * 6.13;
    let s = `<defs><linearGradient id="plotBg" x1="0" y1="0" x2="0" y2="1"><stop offset="0" stop-color="#fff"/><stop offset="1" stop-color="#c4c4c4"/></linearGradient></defs>`;
    s += `<rect x="${L}" y="${T}" width="${R - L}" height="${B - T}" fill="url(#plotBg)"/>`;
    [-5, -10, -15, -20, -25, -30, -35].forEach((db) => {
      const y = yOf(db).toFixed(1);
      s += `<path d="M${L} ${y}H${R}" stroke="#707070"/>`;
      s += `<text x="72" y="${+y + 4}" text-anchor="end">${db}</text>`;
    });
    [10, 100, 1000, 10000].forEach((f) => {
      for (let m = 2; m < 10; m++) {
        const x = xOf(f * m);
        if (x < R) s += `<path d="M${x.toFixed(1)} ${T}V${B + 3}" stroke="#555" stroke-dasharray="4 4"/>`;
      }
      s += `<path d="M${xOf(f).toFixed(1)} ${T}V${B + 5}" stroke="#707070"/>`;
    });
    [[10, "10"], [100, "100"], [1000, "1 000"], [10000, "10 000"]].forEach(([f, t]) => {
      s += `<text x="${xOf(f)}" y="358" text-anchor="middle">${t}</text>`;
    });
    s += `<text class="plot-title" x="502" y="107" text-anchor="middle">Magnitude Frequency Response</text>`;
    s += `<text x="520" y="373" text-anchor="middle">Frequency [Hz]</text>`;
    s += `<text x="0" y="0" text-anchor="middle" transform="translate(51 231) rotate(-90)">Pressure [P+---%BVXpocket Out #1 / , dB</text>`;
    // target band
    s += `<path d="M339 139.500H866M339 200.500H866" stroke="#f4f01c" stroke-width="3.500" stroke-dasharray="9 5"/>`;
    freqTraces.forEach((t) => {
      const head = t.head.map((p, i) => (i ? "L" : "M") + p[0] + " " + p[1]).join("");
      const tail = sampleTail(t.tail, t.phase, t.width > 2 ? 0.5 : 1.2);
      s += `<path d="${head}L${tail}" fill="none" stroke="${t.color}" stroke-width="${t.width}" stroke-linejoin="round"/>`;
    });
    s += `<path d="M340 170H866" stroke="#164a80" stroke-width="2.500"/>`;
    s += `<rect x="${L}" y="${T}" width="${R - L}" height="${B - T}" fill="none" stroke="#000" stroke-width="1.200"/>`;
    document.getElementById("freqChart").innerHTML = s;
  }

  function drawTime() {
    const L = 81, R = 729, T = 412, B = 669, Y0 = 565, PX = 17.85, MS = 1.9;
    let s = "";
    for (let v = -5; v <= 8; v++) {
      const y = Y0 - v * PX;
      s += `<path d="M${L} ${y}H${R}" stroke="#6d7f92"/>`;
      const t = v === 0 ? "0" : (v < 0 ? "-" : "") + "0," + String(Math.abs(v) * 2).padStart(2, "0").replace(/0$/, v % 5 === 0 ? "" : "0");
      s += `<text x="77" y="${y + 4}" text-anchor="end">${t}</text>`;
    }
    for (let ms = 0; ms <= 300; ms += 50) {
      const x = L + ms * MS;
      s += `<path d="M${x} ${T}V${B + 4}" stroke="#555"/>`;
      if (ms <= 250) s += `<text x="${x}" y="684" text-anchor="middle">${ms}</text>`;
    }
    s += `<text x="391" y="698" text-anchor="middle">Time [ms]</text>`;
    s += `<text x="0" y="0" text-anchor="middle" transform="translate(51 547) rotate(-90)">Pressure [P+---%BVXpocket Out #1 / , Linear</text>`;

    // window shape
    let win = "M81 439";
    for (let x = 81; x <= 600; x += 4) {
      const y = Y0 - 126 * Math.cos((Math.PI * (x - L)) / MS / 395);
      win += `L${x} ${y.toFixed(1)}`;
    }
    s += `<path d="${win}" fill="none" stroke="#f0f868" stroke-width="1.300" stroke-dasharray="7 7"/>`;
    s += `<path d="M81 640V439H100" fill="none" stroke="#f2f66a" stroke-width="1.500"/>`;

    // decay of the impulse response, pseudo random but repeatable
    let seed = 7;
    const rnd = () => (seed = (seed * 16807) % 2147483647) / 2147483647;
    const colors = ["#d02030", "#1818c0", "#000000", "#58c41c"];
    colors.forEach((c, ci) => {
      let d = "";
      for (let x = 101; x < 270; x += ci === 3 ? 0.8 : 1.5) {
        const a = (ci === 3 ? 17 : 24) * Math.exp(-(x - 101) / 38) + (x < 232 ? 1.5 : 0.5);
        const k = ci === 3 ? 0.7 + rnd() * 0.3 : rnd() * rnd() * 1.5;
        const k2 = ci === 3 ? 0.7 + rnd() * 0.3 : rnd() * rnd() * 1.3;
        d += `M${x.toFixed(1)} ${(Y0 - a * k).toFixed(1)}V${(Y0 + a * k2).toFixed(1)}`;
      }
      s += `<path d="${d}" stroke="${c}" stroke-width="1"/>`;
    });
    s += `<path d="M110 527V595M104 531V592" stroke="#1818c0" stroke-width="1.200"/>`;
    s += `<path d="M109 530V594M137 545V580M127 548V575" stroke="#d02030" stroke-width="1.200"/>`;
    s += `<path d="M118 543V578M98 527V600" stroke="#000" stroke-width="1"/>`;
    s += `<path d="M100 458V669" stroke="#1818c0" stroke-width="1.200"/>`;
    s += `<path d="M97.500 417V669" stroke="#000" stroke-width="1.500"/>`;
    s += `<path d="M99.500 412V669" stroke="#d82050" stroke-width="1.500"/>`;
    s += `<path d="M98.800 440V662" stroke="#58c41c" stroke-width="1.500"/>`;
    s += `<path d="M81 565H729" stroke="#58c41c" stroke-width="2.500"/>`;
    s += `<rect x="${L}" y="${T}" width="${R - L}" height="${B - T}" fill="none" stroke="#000" stroke-width="1.200"/>`;
    document.getElementById("timeChart").innerHTML = s;
  }

  function fillTable() {
    const rows = [
      ["", "", "", "", "", "", "", ""],
      ["F(Hz)", "250", "500", "1000", "2000", "4000", "8000", "16000"],
      ["SNR(dB)", "36.7", "37.6", "35.5", "30.8", "29.2", "26.7", "27.9"],
      ["EDT(s)", "0.19", "0.10", "0.09", "0.10", "0.10", "0.08", "0.08"],
      ["T30(s)", "0.12", "0.14", "0.12", "0.13", "0.15", "0.18", "0.17"],
      ["T20(s)", "0.14", "0.15", "0.12", "0.13", "0.15", "0.17", "0.15"],
      ["Tc(ms)", "15.9", "6.7", "5.0", "4.6", "4.7", "3.1", "2.0"],
      ["C50(dB)", "23.3", "23.3", "23.3", "23.3", "24.3", "24.1", "23.3"]
    ];
    const widths = [46, 47, 47, 47, 47, 47, 47, 47];
    let h = "<colgroup>" + widths.map((w) => `<col width="${w}">`).join("") + "</colgroup>";
    rows.forEach((r, ri) => {
      h += "<tr>" + r.map((c, ci) => `<td${ri === 3 && ci === 1 ? ' class="cell-sel"' : ""}>${c}</td>`).join("") + "</tr>";
    });
    document.getElementById("resultTable").innerHTML = h;
  }

  drawFreq();
  drawTime();
  fillTable();
</script>
</body>
</html>
